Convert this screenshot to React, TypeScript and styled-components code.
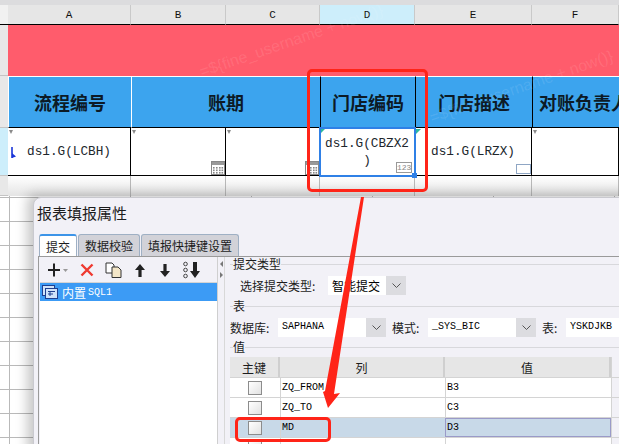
import React from 'react';
import styled, { createGlobalStyle } from 'styled-components';

const CJK = `"Noto Sans CJK SC", "Liberation Sans", sans-serif`;
const MONO = `"Liberation Mono", "Noto Sans CJK SC", monospace`;
const COLS = '8px 123px 95px 94px 95px 117px 1fr';

const Global = createGlobalStyle`
  html, body { margin: 0; padding: 0; background: #fff; }
  body { font-family: ${CJK}; }
`;

const Page = styled.div`
  position: relative;
  width: 619px;
  height: 444px;
  overflow: hidden;
  background: #fff;
`;

const TopStrip = styled.div`
  height: 5px;
  background: #dcdcde;
`;

const Row = styled.div<{ $h: number }>`
  display: grid;
  grid-template-columns: ${COLS};
  height: ${(p) => p.$h}px;
`;

const ColHead = styled.div<{ $active?: boolean }>`
  display: flex;
  align-items: center;
  justify-content: center;
  background: ${(p) => (p.$active ? '#cdeefb' : '#e6e6e6')};
  border-right: 1px solid #c9c9c9;
  border-bottom: 1px solid #000;
  font: 11px ${MONO};
  color: #111;
`;

const RowHead = styled.div<{ $active?: boolean }>`
  background: ${(p) => (p.$active ? '#cdeefb' : '#e8e8e8')};
  border-bottom: 1px solid #c4c4c4;
`;

const Corner = styled.div`
  background: #f1f1f1;
  border-bottom: 1px solid #000;
`;

const Banner = styled.div`
  grid-column: 2 / -1;
  background: #ff5c6c;
`;

const BlueCell = styled.div<{ $span?: number; $dark?: boolean; $start?: boolean }>`
  grid-column: span ${(p) => p.$span ?? 1};
  display: flex;
  align-items: center;
  justify-content: ${(p) => (p.$start ? 'flex-start' : 'center')};
  padding-left: ${(p) => (p.$start ? 6 : 0)}px;
  background: #3ca4ee;
  border-top: 1px solid #fff;
  border-left: 1px solid ${(p) => (p.$dark ? '#000' : '#fff')};
  border-bottom: 1px solid #000;
  font: 700 18px ${CJK};
  color: #0c1a26;
  white-space: nowrap;
  overflow: hidden;
`;

const DataCell = styled.div<{ $selected?: boolean }>`
  position: relative;
  display: flex;
  align-items: center;
  justify-content: center;
  text-align: center;
  background: #fff;
  border-right: 1px solid #000;
  border-bottom: 1px solid #000;
  font: 12.7px/17px ${MONO};
  color: #20262c;
  ${(p) => p.$selected && 'outline: 2px solid #2f80e6; outline-offset: -1px; z-index: 1;'}
`;

const Marker = styled.span`
  position: absolute;
  left: 1px;
  top: 2px;
  width: 0;
  height: 0;
  border-left: 2px solid transparent;
  border-right: 2px solid transparent;
  border-top: 4px solid #8a8a8a;
`;

const Flag = styled.span<{ $size: number }>`
  position: absolute;
  left: 1px;
  top: 1px;
  width: 0;
  height: 0;
  border-top: ${(p) => p.$size}px solid #2bb8a0;
  border-right: ${(p) => p.$size}px solid transparent;
`;

const BlankCell = styled.div`
  background: linear-gradient(#fff, #e4e4e4);
  border-right: 1px solid #b8b8b8;
`;

const Handle = styled.span`
  position: absolute;
  right: -3px;
  bottom: -3px;
  width: 5px;
  height: 5px;
  background: #2f80e6;
`;

const NumBadge = styled.span`
  position: absolute;
  right: 2px;
  bottom: 2px;
  width: 14px;
  height: 9px;
  border: 1px solid #999;
  background: #fff;
  font: 8px/9px ${MONO};
  color: #888;
`;

const TextBadge = styled.span`
  position: absolute;
  right: 0;
  bottom: 1px;
  width: 13px;
  height: 8px;
  border: 1px solid #8fa6c4;
`;

const Calendar = styled.svg`
  position: absolute;
  right: 0;
  bottom: 0;
`;

const LeadArrow = styled.svg`
  position: absolute;
  left: 3px;
  top: 19px;
`;

const GridBack = styled.div`
  height: 248px;
  background-color: #fff;
  background-image:
    linear-gradient(#b9b9b9 1px, transparent 1px),
    linear-gradient(90deg, #b9b9b9 1px, transparent 1px);
  background-size: 100% 24px, 121px 100%;
  background-position: 0 1px, 9px 0;
`;

const Dialog = styled.div`
  position: absolute;
  left: 33px;
  top: 197px;
  width: 600px;
  height: 260px;
  background: #f2f1f7;
  border-top-left-radius: 8px;
  border: 1px solid #c9c9cf;
  box-shadow: -6px -3px 12px rgba(0, 0, 0, 0.22);
  padding: 5px 4px 0;
  box-sizing: border-box;
`;

const Title = styled.div`
  font: 15px/20px ${CJK};
  color: #1c1c1c;
  margin-left: -1px;
  height: 31px;
`;

const Tabs = styled.div`
  display: flex;
  gap: 1px;
  padding-left: 1px;
  height: 22px;
`;

const Tab = styled.div<{ $active?: boolean }>`
  display: flex;
  align-items: center;
  justify-content: center;
  padding: 0 6px;
  box-sizing: border-box;
  font: 12px ${CJK};
  color: #1c1c1c;
  background: ${(p) => (p.$active ? '#fff' : '#d2d2d8')};
  border: 1px solid #9fb0c4;
  border-bottom: none;
  border-top: ${(p) => (p.$active ? '2px solid #3c94e8' : '1px solid #9fb0c4')};
  border-radius: 3px 3px 0 0;
`;

const Body = styled.div`
  display: flex;
  height: 200px;
  border-top: 1px solid #9a9a9a;
`;

const LeftPane = styled.div`
  width: 180px;
  flex: none;
  background: #f2f1f7;
  border-left: 1px solid #9a9a9a;
  border-right: 1px solid #cfcfcf;
  padding-left: 1px;
  box-sizing: border-box;
`;

const Toolbar = styled.div`
  display: flex;
  align-items: center;
  height: 25px;
  padding-left: 7px;
  gap: 11px;
  border-bottom: 1px solid #d4d4d4;
`;

const List = styled.div`
  background: #fff;
  height: 200px;
`;

const ListItem = styled.div`
  display: flex;
  align-items: center;
  gap: 4px;
  height: 18px;
  padding-left: 2px;
  background: #3c9bf5;
  color: #fff;
  font: 12px ${CJK};
`;

const Mono = styled.span`
  font: 10px ${MONO};
  margin-left: -2px;
`;

const Splitter = styled.div`
  width: 7px;
  flex: none;
  display: flex;
  flex-direction: column;
  gap: 5px;
  padding-top: 4px;
  align-items: center;
  box-sizing: border-box;
  border-right: 1px solid #d8d8d8;
`;

const Tri = styled.span<{ $dir: 'l' | 'r' }>`
  width: 0;
  height: 0;
  border-top: 3px solid transparent;
  border-bottom: 3px solid transparent;
  ${(p) => (p.$dir === 'l' ? 'border-right: 3px solid #777;' : 'border-left: 3px solid #777;')}
`;

const RightPane = styled.div`
  flex: 1;
  min-width: 0;
  padding-left: 5px;
  overflow: hidden;
`;

const Legend = styled.div<{ $mt?: number }>`
  display: flex;
  align-items: center;
  height: 14px;
  margin-top: ${(p) => p.$mt ?? 0}px;
  font: 12px/14px ${CJK};
  color: #1c1c1c;
  &::before {
    content: '';
    width: 3px;
    height: 1px;
    background: #d8d8dc;
  }
  &::after {
    content: '';
    flex: 1;
    height: 1px;
    background: #d8d8dc;
  }
`;

const FormRow = styled.div`
  display: flex;
  align-items: center;
  height: 20px;
  margin-top: 4px;
  font: 12px ${CJK};
  color: #1c1c1c;
  white-space: nowrap;
`;

const Label = styled.span<{ $w: number; $indent?: number }>`
  width: ${(p) => p.$w}px;
  margin-left: ${(p) => p.$indent ?? 0}px;
  flex: none;
`;

const Select = styled.div<{ $w: number }>`
  display: flex;
  flex: none;
  width: ${(p) => p.$w}px;
  height: 19px;
  background: #fff;
  margin-right: 6px;
`;

const SelectValue = styled.div<{ $mono?: boolean }>`
  flex: 1;
  padding-left: 4px;
  font: ${(p) => (p.$mono ? `10px/18px ${MONO}` : `12px/19px ${CJK}`)};
  color: #000;
`;

const Chevron = styled.div`
  width: 20px;
  display: flex;
  align-items: center;
  justify-content: center;
  background: #dcdce0;
`;

const Table = styled.div`
  width: 389px;
  margin-top: 3px;
  font: 10px ${MONO};
`;

const TableRow = styled.div<{ $selected?: boolean; $head?: boolean }>`
  display: grid;
  grid-template-columns: 50px 165px 166px 8px;
  height: ${(p) => (p.$head ? 21 : 20)}px;
  background: ${(p) => (p.$head ? '#e6e6e6' : p.$selected ? '#c8d9e8' : '#fff')};
  border-bottom: 1px solid #d4d4d4;
  box-sizing: border-box;
`;

const Stub = styled.div`
  background: #f2f1f7;
  border-left: 1px solid #d4d4d4;
`;

const HeadCell = styled.div`
  display: flex;
  align-items: center;
  justify-content: center;
  font: 12px ${CJK};
  color: #1c1c1c;
  border-right: 2px solid #cfcfcf;
`;

const CheckCell = styled.div`
  display: flex;
  align-items: center;
  justify-content: center;
`;

const Check = styled.span`
  width: 12px;
  height: 12px;
  border: 1px solid #8c8c8c;
  background: linear-gradient(135deg, #fff, #e2e2e2);
`;

const ValueCell = styled.div<{ $focus?: boolean }>`
  display: flex;
  align-items: center;
  padding-left: 1px;
  color: #000;
  border-left: 1px solid #d4d4d4;
  ${(p) => p.$focus && 'outline: 1px solid #9a9ac8; outline-offset: -1px;'}
`;

const Mark = styled.span<{ $x: number; $y: number; $w: number; $h: number }>`
  position: absolute;
  left: ${(p) => p.$x}px;
  top: ${(p) => p.$y}px;
  width: ${(p) => p.$w}px;
  height: ${(p) => p.$h}px;
  box-sizing: border-box;
  border: 3px solid #ff2418;
  border-radius: 5px;
  z-index: 5;
`;

const Arrow = styled.svg`
  position: absolute;
  left: 0;
  top: 0;
  z-index: 5;
`;

const Watermark = styled.span<{ $x: number; $y: number }>`
  position: absolute;
  left: ${(p) => p.$x}px;
  top: ${(p) => p.$y}px;
  transform: rotate(-19deg);
  font: 16px "Liberation Sans", sans-serif;
  color: rgba(255, 255, 255, 0.1);
  white-space: nowrap;
  z-index: 2;
`;

const CalendarIcon = () => (
  <Calendar width="14" height="14" viewBox="0 0 14 14">
    <rect x="0.5" y="0.5" width="13" height="13" fill="#fff" stroke="#888" />
    <rect x="1" y="1" width="12" height="3" fill="#999" />
    {[6, 8.5, 11].map((y) =>
      [3, 6, 9, 11.5].map((x) => <rect key={`${x}-${y}`} x={x - 1} y={y} width="1.6" height="1.6" fill="#888" />),
    )}
  </Calendar>
);

const ChevronIcon = () => (
  <svg width="9" height="5" viewBox="0 0 9 5">
    <path d="M0.5 0.5 L4.5 4.5 L8.5 0.5" stroke="#555" fill="none" />
  </svg>
);

const ArrowUp = () => (
  <svg width="14" height="16" viewBox="0 0 14 16">
    <path d="M7 2 L12 8 H8.6 V15 H5.4 V8 H2 Z" fill="#222" />
  </svg>
);

const ArrowDown = () => (
  <svg width="14" height="16" viewBox="0 0 14 16">
    <path d="M7 15 L12 9 H8.6 V2 H5.4 V9 H2 Z" fill="#222" />
  </svg>
);

const tableRows = [
  { col: 'ZQ_FROM', val: 'B3' },
  { col: 'ZQ_TO', val: 'C3' },
  { col: 'MD', val: 'D3', selected: true },
  { col: '', val: '' },
];

const App = () => {
  return (
    <Page>
      <Global />
      <TopStrip />
      <Row $h={20}>
        <Corner />
        <ColHead>A</ColHead>
        <ColHead>B</ColHead>
        <ColHead>C</ColHead>
        <ColHead $active>D</ColHead>
        <ColHead>E</ColHead>
        <ColHead>F</ColHead>
      </Row>
      <Row $h={51}>
        <RowHead />
        <Banner />
      </Row>
      <Row $h={52}>
        <RowHead />
        <BlueCell>流程编号</BlueCell>
        <BlueCell $span={2}>账期</BlueCell>
        <BlueCell $dark>门店编码</BlueCell>
        <BlueCell $dark>门店描述</BlueCell>
        <BlueCell $dark $start>对账负责人</BlueCell>
      </Row>
      <Row $h={48}>
        <RowHead $active />
        <DataCell>
          <Marker />
          <LeadArrow width="6" height="12" viewBox="0 0 6 12">
            <path d="M1 0 V11" stroke="#1a35d8" strokeWidth="1.6" fill="none" />
            <path d="M1 6 L5 9.5 L1 11 Z" fill="#1a35d8" />
          </LeadArrow>
          ds1.G(LCBH)
        </DataCell>
        <DataCell>
          <Marker />
          <CalendarIcon />
        </DataCell>
        <DataCell>
          <Marker />
          <CalendarIcon />
        </DataCell>
        <DataCell $selected>
          <Flag $size={4} />
          ds1.G(CBZX2
          <br />)
          <NumBadge>123</NumBadge>
          <Handle />
        </DataCell>
        <DataCell>
          <Flag $size={5} />
          ds1.G(LRZX)
          <TextBadge />
        </DataCell>
        <DataCell>
          <Marker />
        </DataCell>
      </Row>
      <Row $h={20}>
        <RowHead />
        <BlankCell />
        <BlankCell />
        <BlankCell />
        <BlankCell />
        <BlankCell />
        <BlankCell />
      </Row>
      <GridBack />

      <Dialog>
        <Title>报表填报属性</Title>
        <Tabs>
          <Tab $active>提交</Tab>
          <Tab>数据校验</Tab>
          <Tab>填报快捷键设置</Tab>
        </Tabs>
        <Body>
          <LeftPane>
            <Toolbar>
              <svg width="22" height="16" viewBox="0 0 22 16">
                <path d="M7 1.5 V14.5 M1 8 H13" stroke="#222" strokeWidth="2" />
                <path d="M16 7 H21 L18.5 10 Z" fill="#999" />
              </svg>
              <svg width="14" height="14" viewBox="0 0 14 14">
                <path d="M1.5 1.5 L12.5 12.5 M12.5 1.5 L1.5 12.5" stroke="#ee3a30" strokeWidth="2.4" />
              </svg>
              <svg width="17" height="16" viewBox="0 0 17 16">
                <path d="M1 1 H7 L9 3 V11 H1 Z" fill="#fff" stroke="#333" />
                <path d="M7 5 H13 L16 8 V15.5 H7 Z" fill="#f3e6c8" stroke="#333" />
              </svg>
              <ArrowUp />
              <ArrowDown />
              <svg width="18" height="18" viewBox="0 0 18 18">
                <circle cx="2.5" cy="3" r="1.8" fill="none" stroke="#444" />
                <circle cx="2.5" cy="9" r="1.8" fill="none" stroke="#444" />
                <circle cx="2.5" cy="15" r="1.8" fill="none" stroke="#444" />
                <path d="M12 17 L17 10 H14 V1 H10 V10 H7 Z" fill="#222" />
              </svg>
            </Toolbar>
            <List>
              <ListItem>
                <svg width="16" height="14" viewBox="0 0 16 14">
                  <rect x="0.5" y="0.5" width="12" height="10" fill="#cfe3fa" stroke="#1f3f8f" />
                  <rect x="3.5" y="3.5" width="12" height="10" fill="#cfe3fa" stroke="#1f3f8f" />
                  <path d="M6 6.5 H13 M6 9 H11 M8 6.5 V11" stroke="#1f3f8f" />
                </svg>
                内置<Mono>SQL1</Mono>
              </ListItem>
            </List>
          </LeftPane>
          <Splitter>
            <Tri $dir="l" />
            <Tri $dir="r" />
          </Splitter>
          <RightPane>
            <Legend>提交类型</Legend>
            <FormRow>
              <Label $w={88} $indent={10}>选择提交类型:</Label>
              <Select $w={78}>
                <SelectValue>智能提交</SelectValue>
                <Chevron>
                  <ChevronIcon />
                </Chevron>
              </Select>
            </FormRow>
            <Legend $mt={4}>表</Legend>
            <FormRow>
              <Label $w={48}>数据库:</Label>
              <Select $w={108}>
                <SelectValue $mono>SAPHANA</SelectValue>
                <Chevron>
                  <ChevronIcon />
                </Chevron>
              </Select>
              <Label $w={36}>模式:</Label>
              <Select $w={108}>
                <SelectValue $mono>_SYS_BIC</SelectValue>
                <Chevron>
                  <ChevronIcon />
                </Chevron>
              </Select>
              <Label $w={24}>表:</Label>
              <Select $w={80}>
                <SelectValue $mono>YSKDJKB</SelectValue>
              </Select>
            </FormRow>
            <Legend $mt={3}>值</Legend>
            <Table>
              <TableRow $head>
                <HeadCell>主键</HeadCell>
                <HeadCell>列</HeadCell>
                <HeadCell>值</HeadCell>
                <Stub />
              </TableRow>
              {tableRows.map((r) => (
                <TableRow key={r.col || 'blank'} $selected={r.selected}>
                  <CheckCell>
                    <Check />
                  </CheckCell>
                  <ValueCell>{r.col}</ValueCell>
                  <ValueCell $focus={r.selected}>{r.val}</ValueCell>
                  <Stub />
                </TableRow>
              ))}
            </Table>
          </RightPane>
        </Body>
      </Dialog>

      <Watermark $x={195} $y={32}>={'${fine_username + now()}'}</Watermark>
      <Watermark $x={425} $y={78}>={'${fine_username + now()}'}</Watermark>
      <Mark $x={307} $y={69} $w={121} $h={123} />
      <Mark $x={235} $y={417} $w={96} $h={25} />
      <Arrow width="619" height="444" viewBox="0 0 619 444">
        <path d="M361 197 L364 197 L334 394 L340 393 L328 408 L323 392 L325 391 Z" fill="#ff2418" />
      </Arrow>
    </Page>
  );
};

export default App;
